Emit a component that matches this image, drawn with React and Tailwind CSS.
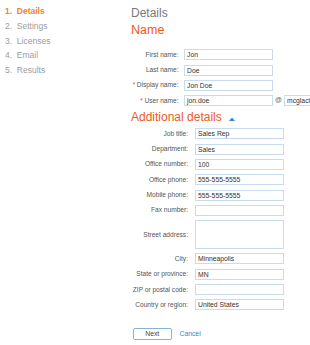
import React from "react";

const Label = ({ children, req, w }) => (
  <div className={`${w} shrink-0 text-right text-[6.6px] text-[#555] whitespace-nowrap`}>
    {req && <span className="text-[#e8581e] mr-[1.5px]">*</span>}
    {children}
  </div>
);

const Input = ({ value, h = "h-[11px]", w = "w-[89px]" }) => (
  <div
    className={`${w} ${h} shrink-0 border border-[#c9dced] bg-white pl-[2px] text-[6.8px] leading-[9px] text-[#333] whitespace-nowrap overflow-hidden`}
  >
    {value}
  </div>
);

export default function App() {
  const nav = ["Details", "Settings", "Licenses", "Email", "Results"];
  const g1 = [
    ["First name:", "Jon"],
    ["Last name:", "Doe"],
    ["Display name:", "Jon Doe", true],
  ];
  const g2a = [
    ["Job title:", "Sales Rep"],
    ["Department:", "Sales"],
    ["Office number:", "100"],
    ["Office phone:", "555-555-5555"],
    ["Mobile phone:", "555-555-5555"],
    ["Fax number:", ""],
  ];
  const g2b = [
    ["City:", "Minneapolis"],
    ["State or province:", "MN"],
    ["ZIP or postal code:", ""],
    ["Country or region:", "United States"],
  ];
  return (
    <div className="w-[310px] h-[345px] bg-white flex overflow-hidden font-['Liberation_Sans',Arial,sans-serif]">
      <nav className="w-[131px] shrink-0 pt-[4px] pl-[5px]">
        {nav.map((n, i) => (
          <div
            key={n}
            className={`h-[14.75px] leading-[14.75px] text-[8.5px] ${
              i === 0 ? "font-bold text-[#f5821f]" : "text-[#9d9d9d]"
            }`}
          >
            {i + 1}.&nbsp;&nbsp;{n}
          </div>
        ))}
      </nav>
      <main className="flex-1 min-w-0 pt-[6px]">
        <div className="h-[14px] leading-[14px] text-[12px] text-[#7a7a7a] font-light">Details</div>
        <div className="mt-[2.5px] h-[15px] leading-[15px] text-[12.5px] text-[#ec5a1f]">Name</div>
        <div className="mt-[11.8px] flex flex-col gap-[4.25px]">
          {g1.map(([l, v, r]) => (
            <div key={l} className="flex items-center gap-[5.5px]">
              <Label w="w-[47.5px]" req={r}>{l}</Label>
              <Input value={v} />
            </div>
          ))}
          <div className="flex items-center gap-[5.5px]">
            <Label w="w-[47.5px]" req>User name:</Label>
            <div className="flex items-center">
              <Input value="jon.doe" />
              <span className="w-[11px] shrink-0 text-center text-[6.8px] text-[#666]">@</span>
              <Input value="mcglacierdesign.onmicrosoft.com" w="w-[60px]" />
            </div>
          </div>
        </div>
        <div className="mt-[3.8px] h-[14px] leading-[14px] text-[12px] text-[#ec5a1f] flex items-center whitespace-nowrap">
          Additional details
          <svg className="ml-[7px] mt-[4px]" width="6" height="4" viewBox="0 0 6 4">
            <path d="M0 4 L3 0.5 L6 4 Z" fill="#2a8dd4" />
          </svg>
        </div>
        <div className="mt-[4.5px] flex flex-col gap-[4.3px]">
          {g2a.map(([l, v]) => (
            <div key={l} className="flex items-center gap-[7px]">
              <Label w="w-[57px]">{l}</Label>
              <Input value={v} />
            </div>
          ))}
          <div className="flex items-center gap-[7px]">
            <Label w="w-[57px]">Street address:</Label>
            <Input value="" h="h-[29px]" />
          </div>
          {g2b.map(([l, v]) => (
            <div key={l} className="flex items-center gap-[7px]">
              <Label w="w-[57px]">{l}</Label>
              <Input value={v} />
            </div>
          ))}
        </div>
        <div className="mt-[17.5px] flex items-center">
          <button className="ml-[2px] w-[38.5px] h-[12px] rounded-[2px] border border-[#86b3d9] bg-white text-[6.8px] leading-[10px] text-[#444]">
            Next
          </button>
          <span className="ml-[8px] text-[6.8px] text-[#2a8dd4]">Cancel</span>
        </div>
      </main>
    </div>
  );
}
